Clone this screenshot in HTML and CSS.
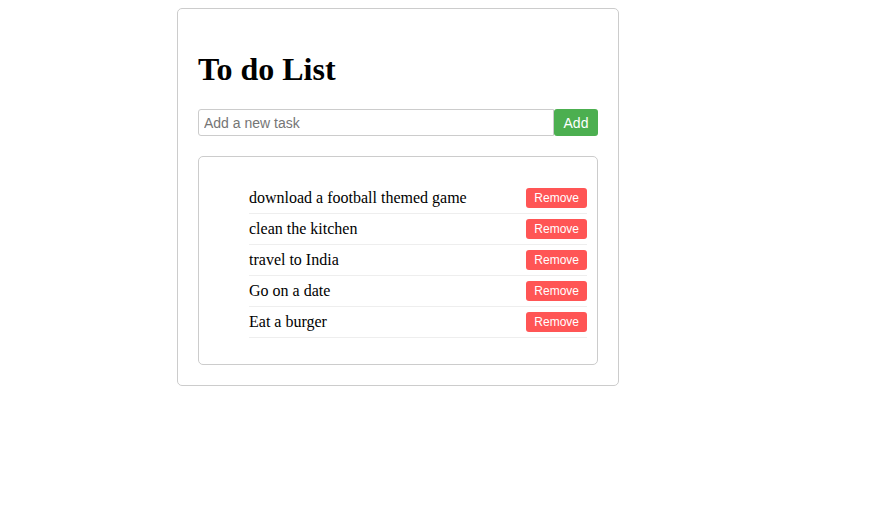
FILE: index.html
```html
<!DOCTYPE html>
<html lang="en">
<head>
<meta charset="utf-8">
<title>To do List</title>
<link rel="stylesheet" href="styles.css">
</head>
<body>
  <div class="app">
    <h1 class="title">To do List</h1>
    <form class="add-form">
      <input class="add-input" type="text" placeholder="Add a new task">
      <button class="add-btn" type="button">Add</button>
    </form>
    <div class="list-box">
      <ul class="task-list">
        <li class="task"><span class="task-text">download a football themed game</span><button class="remove-btn" type="button">Remove</button></li>
        <li class="task"><span class="task-text">clean the kitchen</span><button class="remove-btn" type="button">Remove</button></li>
        <li class="task"><span class="task-text">travel to India</span><button class="remove-btn" type="button">Remove</button></li>
        <li class="task"><span class="task-text">Go on a date</span><button class="remove-btn" type="button">Remove</button></li>
        <li class="task"><span class="task-text">Eat a burger</span><button class="remove-btn" type="button">Remove</button></li>
      </ul>
    </div>
  </div>
</body>
</html>
```

FILE: styles.css
```css
body {
  margin: 0;
  padding: 8px 0 0 177px;
  font-family: "Liberation Serif", "Times New Roman", serif;
  background: #fff;
}

.app {
  width: 400px;
  padding: 20px;
  border: 1px solid #ccc;
  border-radius: 5px;
}

.title {
  font-size: 32px;
  margin: 22px 0 21px;
}

.add-form {
  display: flex;
  margin: 0 0 20px;
}

.add-input {
  flex: 1;
  height: 27px;
  box-sizing: border-box;
  padding: 0 5px;
  border: 1px solid #ccc;
  border-radius: 3px 0 0 3px;
  font-family: "Liberation Sans", Arial, sans-serif;
  font-size: 14px;
  color: #333;
}

.add-input::placeholder {
  color: #757575;
}

.add-btn {
  height: 27px;
  width: 44px;
  border: none;
  border-radius: 3px;
  background: #4caf50;
  color: #fff;
  font-family: "Liberation Sans", Arial, sans-serif;
  font-size: 14px;
  padding: 0;
}

.list-box {
  border: 1px solid #ccc;
  border-radius: 5px;
  padding: 10px;
}

.task-list {
  margin: 16px 0;
  padding-left: 40px;
  list-style: none;
}

.task {
  display: flex;
  justify-content: space-between;
  align-items: center;
  padding: 5px 0;
  border-bottom: 1px solid #eee;
  font-size: 16px;
}

.remove-btn {
  height: 20px;
  padding: 0 8px;
  border: none;
  border-radius: 3px;
  background: #f55;
  color: #fff;
  font-family: "Liberation Sans", Arial, sans-serif;
  font-size: 12px;
}
```
